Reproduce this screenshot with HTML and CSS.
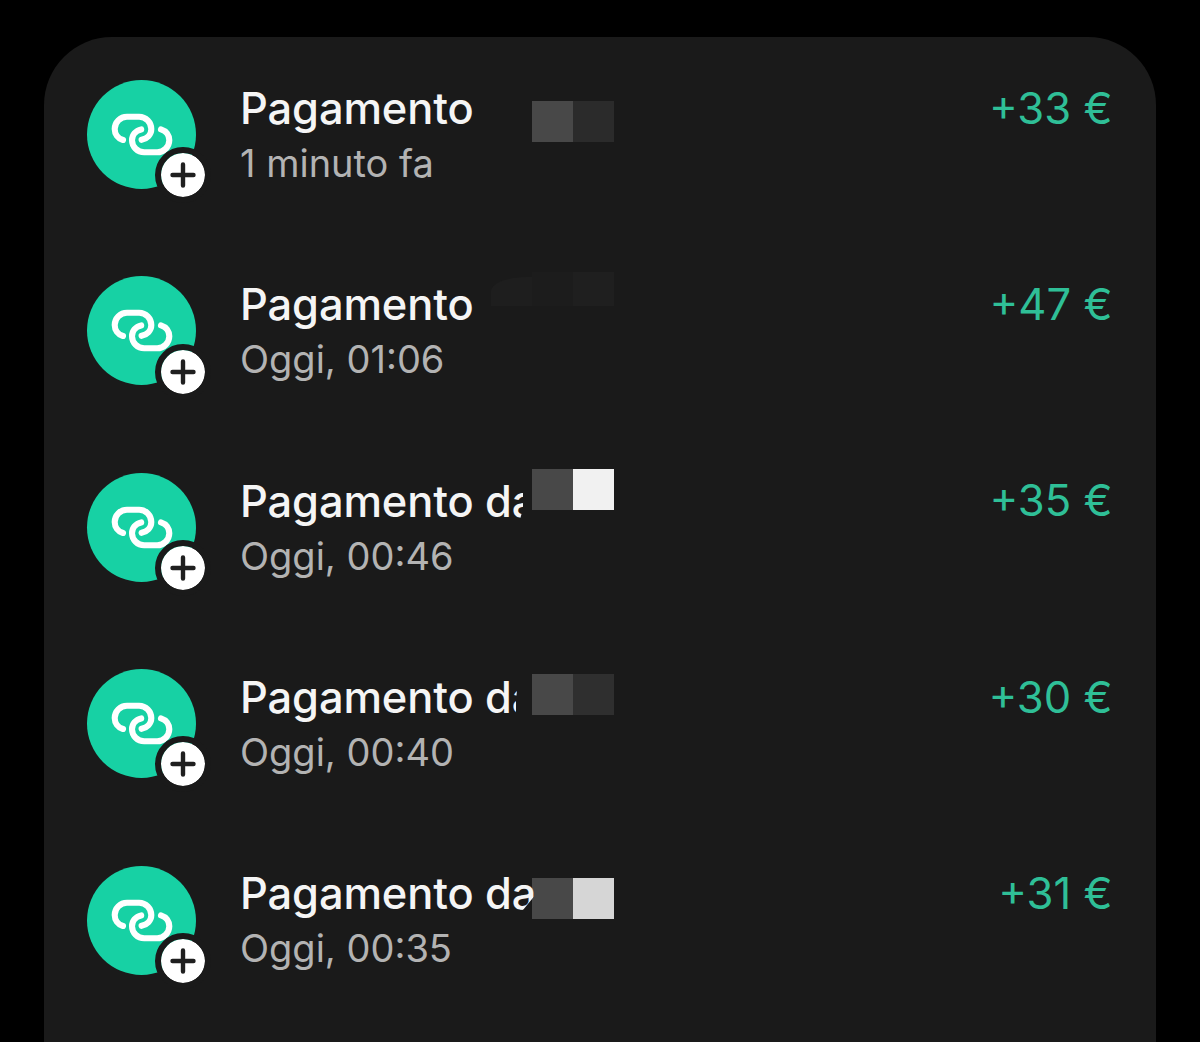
FILE: index.html
```
<!DOCTYPE html>
<html lang="it">
<head>
    <meta charset="UTF-8">
    <meta name="viewport" content="width=device-width, initial-scale=1.0">
    <title>Pagamenti</title>
    <link rel="stylesheet" href="styles.css">
</head>
<body>
    <!-- Icone condivise -->
    <svg class="symbols" aria-hidden="true">
        <symbol id="link" viewBox="0 0 109 109">
            <path d="M36 60C31 58.500 27.700 54 27.700 49A12.300 12.300 0 0 1 40 36.700H52.100A12.300 12.300 0 0 1 64.300 49C64.300 54.500 60 58.700 54.600 59.800"/>
            <path d="M54.200 49.400C48.700 50.500 45 55 45 60.300A12.200 12.200 0 0 0 57.200 72.300H70.200A12.200 12.200 0 0 0 82.300 60.300C82.300 55.500 79.300 51 74 49.400"/>
        </symbol>
        <symbol id="plus" viewBox="0 0 44 44">
            <path d="M22 11.500V32.500M11.500 22H32.500"/>
        </symbol>
    </svg>

    <main class="card">
        <div class="row">
            <div class="avatar">
                <svg class="link"><use href="#link"/></svg>
                <span class="badge"><svg class="plus"><use href="#plus"/></svg></span>
            </div>
            <div class="info">
                <div class="title">Pagamento</div>
                <div class="time">1 minuto fa</div>
            </div>
            <div class="amount">+33 €</div>
            <div class="pixels one"><span></span><span></span></div>
        </div>

        <div class="row">
            <div class="avatar">
                <svg class="link"><use href="#link"/></svg>
                <span class="badge"><svg class="plus"><use href="#plus"/></svg></span>
            </div>
            <div class="info">
                <div class="title">Pagamento</div>
                <div class="time">Oggi, 01:06</div>
            </div>
            <div class="amount">+47 €</div>
            <div class="pixels two"><span></span><span></span><span></span></div>
        </div>

        <div class="row">
            <div class="avatar">
                <svg class="link"><use href="#link"/></svg>
                <span class="badge"><svg class="plus"><use href="#plus"/></svg></span>
            </div>
            <div class="info">
                <div class="title cut-three">Pagamento da</div>
                <div class="time">Oggi, 00:46</div>
            </div>
            <div class="amount">+35 €</div>
            <div class="pixels three"><span></span><span></span></div>
        </div>

        <div class="row">
            <div class="avatar">
                <svg class="link"><use href="#link"/></svg>
                <span class="badge"><svg class="plus"><use href="#plus"/></svg></span>
            </div>
            <div class="info">
                <div class="title cut-four">Pagamento da</div>
                <div class="time">Oggi, 00:40</div>
            </div>
            <div class="amount">+30 €</div>
            <div class="pixels four"><span></span><span></span></div>
        </div>

        <div class="row">
            <div class="avatar">
                <svg class="link"><use href="#link"/></svg>
                <span class="badge"><svg class="plus"><use href="#plus"/></svg></span>
            </div>
            <div class="info">
                <div class="title cut-five">Pagamento da</div>
                <div class="time">Oggi, 00:35</div>
            </div>
            <div class="amount">+31 €</div>
            <div class="pixels five"><span></span><span></span></div>
        </div>
    </main>
</body>
</html>
```

FILE: styles.css
```
/* === BASE === */
* {
    box-sizing: border-box;
}

body {
    margin: 0;
    height: 1042px;
    padding: 37px 44px 0;
    background-color: #000;
    font-family: Inter, "Liberation Sans", sans-serif;
}

.symbols {
    display: none;
}

/* === SCHEDA === */
.card {
    height: 1005px;
    padding: 43px 43.5px 0 43px;
    border-radius: 68px 68px 0 0;
    background-color: #1a1a1a;
}

.row {
    position: relative;
    display: flex;
    height: 196.4px;
}

.row:last-child {
    height: 125px;
}

/* === ICONA === */
.avatar {
    position: relative;
    flex: none;
    width: 109px;
    height: 109px;
    border-radius: 50%;
    background-color: #17d1a4;
}

.link {
    display: block;
    width: 109px;
    height: 109px;
    fill: none;
    stroke: #fff;
    stroke-width: 6.1;
    stroke-linecap: round;
}

.badge {
    position: absolute;
    left: 68px;
    top: 67.3px;
    width: 56px;
    height: 56px;
    border: 6px solid #1a1a1a;
    border-radius: 50%;
    background-color: #fff;
    background-clip: padding-box;
}

.plus {
    display: block;
    width: 44px;
    height: 44px;
    fill: none;
    stroke: #1f1f1f;
    stroke-width: 4.4;
    stroke-linecap: round;
}

/* === TESTI === */
.info {
    flex: 1;
    padding: 0.8px 0 0 44px;
    white-space: nowrap;
}

.title {
    position: relative;
    z-index: 1;
    font-size: 43.4px;
    font-weight: 500;
    line-height: 54px;
    letter-spacing: -0.1px;
    color: #f5f5f5;
}

.time {
    font-size: 38px;
    line-height: 56px;
    color: #b3b3b3;
}

.amount {
    padding-top: 1.5px;
    font-size: 43.6px;
    line-height: 54px;
    color: #2fbf97;
}

/* La "a" finale resta tagliata accanto al nome oscurato */
.cut-three {
    clip-path: polygon(0 0, 283px 0, 283px 35px, 280px 46px, 280px 60px, 0 60px);
}

.cut-four {
    clip-path: polygon(0 0, 279px 0, 276px 30px, 276px 60px, 0 60px);
}

.cut-five {
    clip-path: polygon(0 0, 295px 0, 295px 29px, 282px 45px, 282px 60px, 0 60px);
}

/* === NOMI OSCURATI === */
.pixels {
    position: absolute;
    left: 445px;
    display: flex;
}

.pixels span {
    width: 41px;
    height: 41px;
    background-color: #484848;
}

.pixels.one { top: 21px; }
.pixels.two { top: -4.5px; left: 404px; }
.pixels.three { top: -3.8px; }
.pixels.four { top: 4.8px; }
.pixels.five { top: 12.8px; }

.pixels.one span:last-child { background-color: #2b2b2b; }
.pixels.three span:last-child { background-color: #f1f1f1; }
.pixels.four span:last-child { background-color: #2f2f2f; }
.pixels.five span:last-child { background-color: #d6d6d6; }

.pixels.two span {
    height: 34px;
    background-color: #1c1c1c;
}

.pixels.two span:first-child {
    height: 29px;
    margin-top: 5px;
    border-top-left-radius: 36px 14px;
    background-color: #1e1e1e;
}

.pixels.two span:last-child {
    background-color: #1f1f1f;
}
```
